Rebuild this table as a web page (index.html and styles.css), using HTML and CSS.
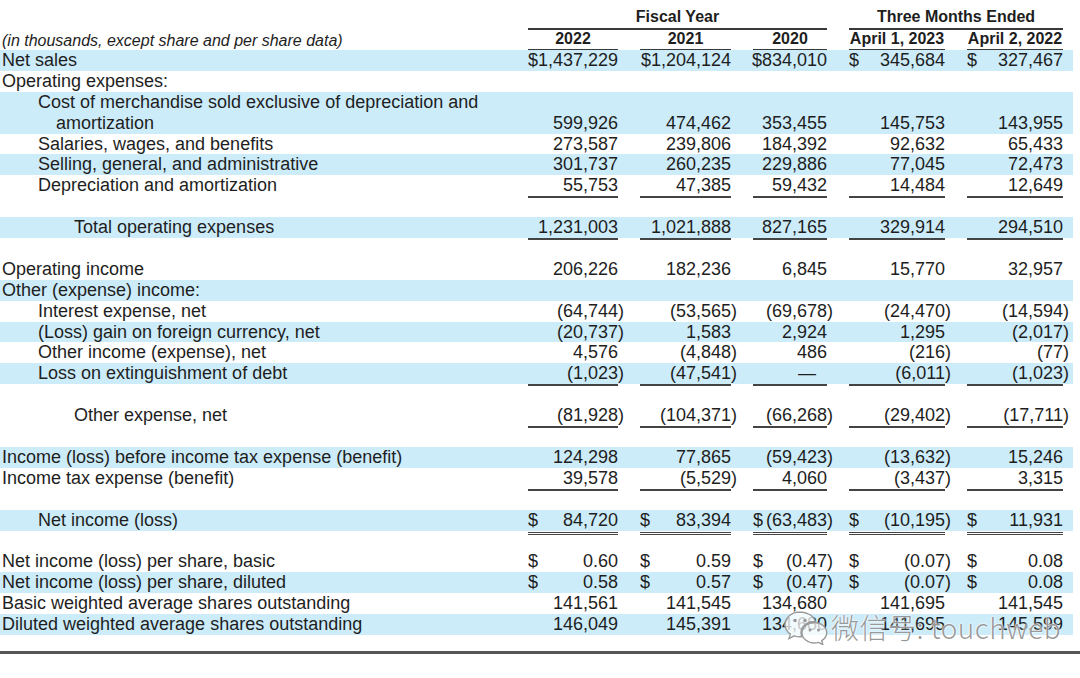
FILE: index.html
```html
<!DOCTYPE html>
<html lang="en">
<head>
<meta charset="utf-8">
<title>Statement of Operations</title>
<link rel="stylesheet" href="styles.css">
</head>
<body>
<div class="sheet">
  <div class="hdr hdr1">
    <div></div>
    <div class="hc fy">Fiscal Year</div>
    <div class="hc tm">Three Months Ended</div>
  </div>
  <div class="hdr hdr2">
    <div class="note">(in thousands, except share and per share data)</div>
    <div class="hc">2022</div>
    <div class="hc">2021</div>
    <div class="hc">2020</div>
    <div class="hc">April 1, 2023</div>
    <div class="hc">April 2, 2022</div>
  </div>

  <div class="row band">
    <div class="lbl">Net sales</div>
    <div class="n"><span>$1,437,229</span></div>
    <div class="n"><span>$1,204,124</span></div>
    <div class="n"><span>$834,010</span></div>
    <div class="n ds"><span>$</span><span>345,684</span></div>
    <div class="n ds"><span>$</span><span>327,467</span></div>
  </div>
  <div class="row">
    <div class="lbl">Operating expenses:</div>
  </div>
  <div class="row band tall">
    <div class="lbl hang">Cost of merchandise sold exclusive of depreciation and<br>amortization</div>
    <div class="n"><span>599,926</span></div>
    <div class="n"><span>474,462</span></div>
    <div class="n"><span>353,455</span></div>
    <div class="n"><span>145,753</span></div>
    <div class="n"><span>143,955</span></div>
  </div>
  <div class="row">
    <div class="lbl i1">Salaries, wages, and benefits</div>
    <div class="n"><span>273,587</span></div>
    <div class="n"><span>239,806</span></div>
    <div class="n"><span>184,392</span></div>
    <div class="n"><span>92,632</span></div>
    <div class="n"><span>65,433</span></div>
  </div>
  <div class="row band">
    <div class="lbl i1">Selling, general, and administrative</div>
    <div class="n"><span>301,737</span></div>
    <div class="n"><span>260,235</span></div>
    <div class="n"><span>229,886</span></div>
    <div class="n"><span>77,045</span></div>
    <div class="n"><span>72,473</span></div>
  </div>
  <div class="row">
    <div class="lbl i1">Depreciation and amortization</div>
    <div class="n u"><span>55,753</span></div>
    <div class="n u"><span>47,385</span></div>
    <div class="n u"><span>59,432</span></div>
    <div class="n u"><span>14,484</span></div>
    <div class="n u"><span>12,649</span></div>
  </div>
  <div class="row"></div>
  <div class="row band">
    <div class="lbl i2">Total operating expenses</div>
    <div class="n u"><span>1,231,003</span></div>
    <div class="n u"><span>1,021,888</span></div>
    <div class="n u"><span>827,165</span></div>
    <div class="n u"><span>329,914</span></div>
    <div class="n u"><span>294,510</span></div>
  </div>
  <div class="row"></div>
  <div class="row">
    <div class="lbl">Operating income</div>
    <div class="n"><span>206,226</span></div>
    <div class="n"><span>182,236</span></div>
    <div class="n"><span>6,845</span></div>
    <div class="n"><span>15,770</span></div>
    <div class="n"><span>32,957</span></div>
  </div>
  <div class="row band">
    <div class="lbl">Other (expense) income:</div>
  </div>
  <div class="row">
    <div class="lbl i1">Interest expense, net</div>
    <div class="n"><span>(64,744<i class="p">)</i></span></div>
    <div class="n"><span>(53,565<i class="p">)</i></span></div>
    <div class="n"><span>(69,678<i class="p">)</i></span></div>
    <div class="n"><span>(24,470<i class="p">)</i></span></div>
    <div class="n"><span>(14,594<i class="p">)</i></span></div>
  </div>
  <div class="row band">
    <div class="lbl i1">(Loss) gain on foreign currency, net</div>
    <div class="n"><span>(20,737<i class="p">)</i></span></div>
    <div class="n"><span>1,583</span></div>
    <div class="n"><span>2,924</span></div>
    <div class="n"><span>1,295</span></div>
    <div class="n"><span>(2,017<i class="p">)</i></span></div>
  </div>
  <div class="row">
    <div class="lbl i1">Other income (expense), net</div>
    <div class="n"><span>4,576</span></div>
    <div class="n"><span>(4,848<i class="p">)</i></span></div>
    <div class="n"><span>486</span></div>
    <div class="n"><span>(216<i class="p">)</i></span></div>
    <div class="n"><span>(77<i class="p">)</i></span></div>
  </div>
  <div class="row band">
    <div class="lbl i1">Loss on extinguishment of debt</div>
    <div class="n u"><span>(1,023<i class="p">)</i></span></div>
    <div class="n u"><span>(47,541<i class="p">)</i></span></div>
    <div class="n u"><span class="dash">—</span></div>
    <div class="n u"><span>(6,011<i class="p">)</i></span></div>
    <div class="n u"><span>(1,023<i class="p">)</i></span></div>
  </div>
  <div class="row"></div>
  <div class="row">
    <div class="lbl i2">Other expense, net</div>
    <div class="n u"><span>(81,928<i class="p">)</i></span></div>
    <div class="n u"><span>(104,371<i class="p">)</i></span></div>
    <div class="n u"><span>(66,268<i class="p">)</i></span></div>
    <div class="n u"><span>(29,402<i class="p">)</i></span></div>
    <div class="n u"><span>(17,711<i class="p">)</i></span></div>
  </div>
  <div class="row"></div>
  <div class="row band">
    <div class="lbl">Income (loss) before income tax expense (benefit)</div>
    <div class="n"><span>124,298</span></div>
    <div class="n"><span>77,865</span></div>
    <div class="n"><span>(59,423<i class="p">)</i></span></div>
    <div class="n"><span>(13,632<i class="p">)</i></span></div>
    <div class="n"><span>15,246</span></div>
  </div>
  <div class="row">
    <div class="lbl">Income tax expense (benefit)</div>
    <div class="n u"><span>39,578</span></div>
    <div class="n u"><span>(5,529<i class="p">)</i></span></div>
    <div class="n u"><span>4,060</span></div>
    <div class="n u"><span>(3,437<i class="p">)</i></span></div>
    <div class="n u"><span>3,315</span></div>
  </div>
  <div class="row"></div>
  <div class="row band">
    <div class="lbl i1">Net income (loss)</div>
    <div class="n ds uu"><span>$</span><span>84,720</span></div>
    <div class="n ds uu"><span>$</span><span>83,394</span></div>
    <div class="n ds uu"><span>$</span><span>(63,483<i class="p">)</i></span></div>
    <div class="n ds uu"><span>$</span><span>(10,195<i class="p">)</i></span></div>
    <div class="n ds uu"><span>$</span><span>11,931</span></div>
  </div>
  <div class="row"></div>
  <div class="row">
    <div class="lbl">Net income (loss) per share, basic</div>
    <div class="n ds"><span>$</span><span>0.60</span></div>
    <div class="n ds"><span>$</span><span>0.59</span></div>
    <div class="n ds"><span>$</span><span>(0.47<i class="p">)</i></span></div>
    <div class="n ds"><span>$</span><span>(0.07<i class="p">)</i></span></div>
    <div class="n ds"><span>$</span><span>0.08</span></div>
  </div>
  <div class="row band">
    <div class="lbl">Net income (loss) per share, diluted</div>
    <div class="n ds"><span>$</span><span>0.58</span></div>
    <div class="n ds"><span>$</span><span>0.57</span></div>
    <div class="n ds"><span>$</span><span>(0.47<i class="p">)</i></span></div>
    <div class="n ds"><span>$</span><span>(0.07<i class="p">)</i></span></div>
    <div class="n ds"><span>$</span><span>0.08</span></div>
  </div>
  <div class="row">
    <div class="lbl">Basic weighted average shares outstanding</div>
    <div class="n"><span>141,561</span></div>
    <div class="n"><span>141,545</span></div>
    <div class="n"><span>134,680</span></div>
    <div class="n"><span>141,695</span></div>
    <div class="n"><span>141,545</span></div>
  </div>
  <div class="row band">
    <div class="lbl">Diluted weighted average shares outstanding</div>
    <div class="n"><span>146,049</span></div>
    <div class="n"><span>145,391</span></div>
    <div class="n"><span>134,680</span></div>
    <div class="n"><span>141,695</span></div>
    <div class="n"><span>145,599</span></div>
  </div>
</div>
<div class="rule"></div>

<div class="wm">
  <svg class="wm-logo" width="46" height="36" viewBox="0 0 46 36">
    <path d="M17 3 C8.5 3 2 8.6 2 15.5 C2 19.4 4.1 22.8 7.4 25 L6 29.5 L11.2 26.8 C13 27.4 15 27.8 17 27.8 C17.6 27.8 18.2 27.8 18.8 27.7 C18.3 26.5 18 25.2 18 23.8 C18 17.5 23.9 12.5 31.3 12.5 C31.7 12.5 32.1 12.5 32.5 12.6 C31 7.1 24.6 3 17 3 Z" fill="rgba(255,255,255,0.75)" stroke="#9a9a9a" stroke-width="1.4"/>
    <path d="M31.3 13.5 C24.5 13.5 19 18.1 19 23.8 C19 29.5 24.5 34 31.3 34 C32.8 34 34.2 33.8 35.5 33.4 L39.8 35.5 L38.7 31.7 C41.8 29.9 43.7 27 43.7 23.8 C43.7 18.1 38.1 13.5 31.3 13.5 Z" fill="rgba(255,255,255,0.75)" stroke="#9a9a9a" stroke-width="1.4"/>
    <circle cx="12" cy="11.5" r="1.8" fill="#9a9a9a"/>
    <circle cx="22" cy="11.5" r="1.8" fill="#9a9a9a"/>
    <circle cx="27" cy="21" r="1.5" fill="#9a9a9a"/>
    <circle cx="35.5" cy="21" r="1.5" fill="#9a9a9a"/>
  </svg>
  <span class="wm-text">微信号: touchweb</span>
</div>
</body>
</html>
```
FILE: styles.css
```css
html, body {
  margin: 0;
  padding: 0;
  background: #ffffff;
}

body {
  width: 1080px;
  height: 678px;
  position: relative;
  overflow: hidden;
  font-family: "Liberation Sans", Arial, sans-serif;
  color: #1e1e1e;
}

.sheet {
  display: flex;
  flex-direction: column;
  width: 1073px;
}

.hdr,
.row {
  display: grid;
  grid-template-columns: 506px 90px 91px 74px 96px 96px;
  column-gap: 22px;
  padding-right: 10px;
}

.hdr {
  font-size: 16px;
  font-weight: bold;
  line-height: 18px;
}

.hdr1 {
  height: 30px;
}

.hdr2 {
  height: 20px;
}

.hc {
  box-sizing: border-box;
  display: flex;
  align-items: flex-end;
  justify-content: center;
  border-bottom: 2px solid #3a3a3a;
  padding-bottom: 1px;
  white-space: nowrap;
}

.hdr1 .hc {
  padding-bottom: 2px;
}

.fy {
  grid-column: 2 / span 3;
}

.tm {
  grid-column: 5 / span 2;
}

.note {
  font-weight: normal;
  font-style: italic;
  display: flex;
  align-items: flex-end;
  padding-left: 2px;
  padding-bottom: 1px;
  white-space: nowrap;
}

.row {
  height: 20.9px;
  font-size: 18px;
  line-height: 20.9px;
}

.row.tall {
  height: 41.8px;
}

.band {
  background: #cdecfa;
}

.lbl {
  padding-left: 2px;
  white-space: nowrap;
}

.lbl.i1 {
  padding-left: 38px;
}

.lbl.i2 {
  padding-left: 74px;
}

.lbl.hang {
  padding-left: 56px;
  text-indent: -18px;
}

.n {
  position: relative;
  display: flex;
  justify-content: flex-end;
  align-items: flex-end;
  white-space: nowrap;
}

.n.ds {
  justify-content: space-between;
}

.p {
  font-style: normal;
  display: inline-block;
  width: 0;
}

.dash {
  padding-right: 11px;
}

.u::after {
  content: "";
  position: absolute;
  left: 0;
  right: 0;
  top: 100%;
  height: 2px;
  background: #444;
}

.uu::after {
  content: "";
  position: absolute;
  left: 0;
  right: 0;
  top: 100%;
  margin-top: 1px;
  height: 1px;
  border-top: 1.5px solid #444;
  border-bottom: 1.5px solid #444;
}

.rule {
  position: absolute;
  left: 0;
  top: 651px;
  width: 1080px;
  height: 3px;
  background: #555;
}

.wm {
  position: absolute;
  left: 783px;
  top: 609px;
  display: flex;
  align-items: center;
  gap: 2px;
}

.wm-text {
  font-family: "Noto Sans CJK SC", "Noto Sans", sans-serif;
  font-weight: 300;
  font-size: 28px;
  line-height: 36px;
  color: rgba(135, 135, 135, 0.85);
  text-shadow: 0 0 2px #fff, 0 0 2px #fff;
  letter-spacing: 0.5px;
}
```
